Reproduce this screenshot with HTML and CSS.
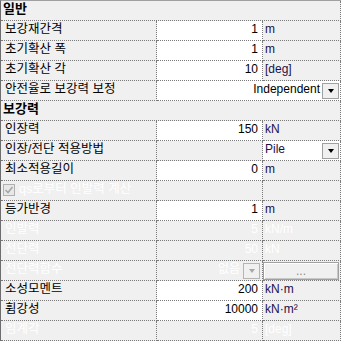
FILE: index.html
```html
<!DOCTYPE html>
<html lang="ko">
<head>
    <meta charset="UTF-8">
    <meta name="viewport" content="width=device-width, initial-scale=1.0">
    <title>보강재 속성</title>
    <link rel="stylesheet" href="styles.css">
</head>
<body>
    <div class="grid">
        <div class="row"><div class="cell head">일반</div></div>
        <div class="row">
            <div class="cell name">보강재간격</div>
            <div class="cell val edit">1</div>
            <div class="cell unit">m</div>
        </div>
        <div class="row">
            <div class="cell name">초기확산 폭</div>
            <div class="cell val edit">1</div>
            <div class="cell unit">m</div>
        </div>
        <div class="row">
            <div class="cell name">초기확산 각</div>
            <div class="cell val edit">10</div>
            <div class="cell unit">[deg]</div>
        </div>
        <div class="row">
            <div class="cell name">안전율로 보강력 보정</div>
            <div class="cell wide edit">Independent<span class="drop"></span></div>
        </div>

        <div class="row"><div class="cell head">보강력</div></div>
        <div class="row">
            <div class="cell name">인장력</div>
            <div class="cell val edit">150</div>
            <div class="cell unit">kN</div>
        </div>
        <div class="row">
            <div class="cell name">인장/전단 적용방법</div>
            <div class="cell val"></div>
            <div class="cell unit edit pick">Pile<span class="drop"></span></div>
        </div>
        <div class="row">
            <div class="cell name">최소적용길이</div>
            <div class="cell val edit">0</div>
            <div class="cell unit">m</div>
        </div>
        <div class="row">
            <div class="cell name check-cell">
                <span class="check">
                    <svg width="10" height="10" viewBox="0 0 10 10"><polyline points="1.5,5 4,7.5 8.5,2" fill="none" stroke="#a6a6a6" stroke-width="1.6"/></svg>
                </span>
                <span class="off">qs로부터 인발력 계산</span>
            </div>
            <div class="cell val"></div>
            <div class="cell unit"></div>
        </div>
        <div class="row">
            <div class="cell name">등가반경</div>
            <div class="cell val edit">1</div>
            <div class="cell unit">m</div>
        </div>
        <div class="row off">
            <div class="cell name">인발력</div>
            <div class="cell val">5</div>
            <div class="cell unit">kN/m</div>
        </div>
        <div class="row off">
            <div class="cell name">전단력</div>
            <div class="cell val">50</div>
            <div class="cell unit">kN</div>
        </div>
        <div class="row off">
            <div class="cell name">전단력함수</div>
            <div class="cell val fn">없음<span class="drop dim"></span></div>
            <div class="cell unit btn-cell"><span class="dots">...</span></div>
        </div>
        <div class="row">
            <div class="cell name">소성모멘트</div>
            <div class="cell val edit">200</div>
            <div class="cell unit">kN·m</div>
        </div>
        <div class="row">
            <div class="cell name">휨강성</div>
            <div class="cell val edit">10000</div>
            <div class="cell unit">kN·m²</div>
        </div>
        <div class="row off">
            <div class="cell name">임계각</div>
            <div class="cell val">5</div>
            <div class="cell unit">[deg]</div>
        </div>
    </div>
</body>
</html>
```

FILE: styles.css
```css
body {
    margin: 0;
    padding: 0;
    background-color: #f0f0f0;
    font-family: "Liberation Sans", "Noto Sans CJK KR", sans-serif;
    font-size: 12px;
    color: #000;
}
.grid {
    width: 341px;
    height: 341px;
    box-sizing: border-box;
    border-top: 1px solid #a0a0a0;
    border-left: 1px solid #6d6d6d;
    background-color: #f0f0f0;
    overflow: hidden;
}
.row {
    display: flex;
    height: 20px;
}
.cell {
    display: flex;
    box-sizing: border-box;
    height: 20px;
    padding-top: 1px;
    line-height: 14px;
    white-space: nowrap;
    border-bottom: 1px dotted #7a7a7a;
    border-right: 1px dotted #7a7a7a;
}
.head {
    width: 340px;
    padding-left: 2px;
    font-weight: bold;
    font-size: 13px;
}
.name {
    width: 156px;
    padding-left: 4px;
    font-size: 12.5px;
}
.val {
    width: 106px;
    justify-content: flex-end;
    padding-right: 4px;
}
.unit {
    width: 78px;
    padding-left: 2px;
    color: #1a1248;
}
.wide {
    width: 184px;
    justify-content: flex-end;
    padding-right: 1px;
}
.edit {
    background-color: #fff;
}
.pick {
    padding-right: 1px;
}
.pick .drop {
    margin-left: auto;
}

/* 콤보 버튼 */
.drop {
    display: flex;
    align-items: center;
    justify-content: center;
    align-self: center;
    width: 17px;
    height: 16px;
    margin-left: 2px;
    box-sizing: border-box;
    border: 1px solid #a0a0a0;
    background-color: #f0f0f0;
}
.drop::after {
    content: "";
    border-left: 3.5px solid transparent;
    border-right: 3.5px solid transparent;
    border-top: 4px solid #000;
}
.drop.dim {
    border-color: #b4b4b4;
}
.drop.dim::after {
    border-top-color: #a8a8a8;
}
.fn {
    padding-right: 2px;
}
.fn .drop {
    margin-left: 3px;
}
.btn-cell {
    padding-left: 0;
}
.dots {
    display: flex;
    justify-content: center;
    align-items: center;
    width: 76px;
    height: 18px;
    box-sizing: border-box;
    border: 1px solid #a0a0a0;
    box-shadow: inset 1px 1px 0 #fff, inset -1px -1px 0 #c8c8c8;
    background-color: #f0f0f0;
    color: #8a8a8a;
    line-height: 14px;
}

/* 비활성 항목 */
.off,
.off .unit {
    color: #fff;
}
.check-cell {
    padding-left: 2px;
}
.check {
    display: flex;
    align-items: center;
    justify-content: center;
    width: 12px;
    height: 12px;
    margin-top: 2px;
    margin-right: 4px;
    box-sizing: border-box;
    border: 1px solid #b0b0b0;
    background-color: #e8e8e8;
}
```
